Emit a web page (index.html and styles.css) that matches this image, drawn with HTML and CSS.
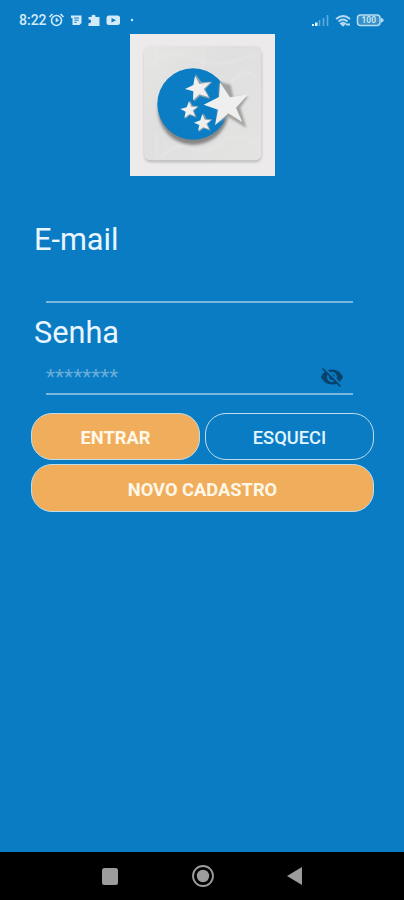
FILE: index.html
```html
<!DOCTYPE html>
<html lang="pt-BR">

<head>
    <meta charset="UTF-8">
    <meta name="viewport" content="width=device-width, initial-scale=1.0">
    <title>Login</title>
    <link rel="stylesheet" href="styles.css">
</head>

<body>
    <!-- Status bar -->
    <header class="status-bar">
        <span class="clock">8:22</span>
        <svg class="status-left" width="90" height="16" viewBox="0 0 90 16">
            <g fill="none" stroke="#d3eaf8" stroke-width="1.6">
                <circle cx="9.500" cy="8.500" r="5" />
                <path d="M2.500 5l3-3M16.500 5l-3-3M9.500 6v3l2-1" />
            </g>
            <g fill="#d3eaf8">
                <path d="M24 3.500h10.500v7.500l-2 2H25.500V6H24z" />
                <path d="M41.500 5h3.200a1.900 1.900 0 1 1 3.700 0H52.500v9H41.500v-3a1.900 1.900 0 1 0 0-3.500z" />
                <rect x="59.500" y="3.500" width="13.500" height="9.500" rx="2.500" />
                <circle cx="85" cy="8" r="1.200" />
            </g>
            <path d="M27 6h5M27.500 8.200h4M27.500 10.400h2" stroke="#0a7cc4" />
            <path d="M64.500 6l4.500 2.300-4.500 2.200z" fill="#0a7cc4" />
        </svg>
        <svg class="status-right" width="74" height="16" viewBox="0 0 74 16">
            <path d="M1 14v-2h2v2zM4 14v-3.500h2.500V14z" fill="#e1f5fa" />
            <path d="M8.500 14V8M12.500 14V6M16.500 14V3" stroke="#5eacdb" stroke-width="1.600" />
            <g fill="none" stroke="#b5dcf2" stroke-width="1.800">
                <path d="M25 7q7.500-6 14 0M27.500 9.500q4.500-4 9 0" />
                <path d="M30 11.500q2-1.500 4 0L32 13.500zM35 12.500h4" />
            </g>
            <rect x="46.500" y="3" width="22.500" height="10.500" rx="3" fill="#388fc9" stroke="#b5dcf2" stroke-width="1.500" />
            <path d="M70.500 6l2 2.200-2 2.200z" fill="#b5dcf2" stroke="#b5dcf2" />
            <text class="battery" x="57.700" y="11.300" text-anchor="middle">100</text>
        </svg>
    </header>

    <main class="login">
        <svg class="logo" viewBox="18 18 435 426">
            <defs>
                <linearGradient id="paper" x1="0" y1="0" x2="1" y2="1">
                    <stop offset="0" stop-color="#e7e6e5" />
                    <stop offset=".4" stop-color="#dedfde" />
                    <stop offset="1" stop-color="#e4e4e3" />
                </linearGradient>
                <filter id="soft" x="-20%" y="-20%" width="140%" height="140%">
                    <feGaussianBlur stdDeviation="5" />
                </filter>
                <filter id="edge" x="-20%" y="-20%" width="140%" height="140%">
                    <feGaussianBlur stdDeviation="2.500" />
                </filter>
            </defs>
            <rect x="18" y="18" width="435" height="426" fill="#eceaea" />
            <rect x="62" y="62" width="350" height="340" rx="18" fill="#b4b4b4" filter="url(#soft)" />
            <rect x="60" y="53" width="352" height="344" rx="18" fill="url(#paper)" />
            <g fill="none" stroke="#e9e9e8" stroke-width="6" opacity=".6" filter="url(#edge)">
                <path d="M98 60v60M98 310v84M236 55v68M70 120q50-60 120-35t110 20 105-30" />
                <path d="M110 390q50-55 90-30t90-15 115 10M320 170q30-60 80-20" />
            </g>
            <!-- Shadows -->
            <circle cx="208" cy="245" r="106" fill="#858585" filter="url(#soft)" />
            <circle cx="207" cy="228" r="107" fill="#0b7dc5" />
            <path d="M288 162l32 8 8 38 45-4-24 35 18 60-54-32-34 18z" fill="#a2a2a1" filter="url(#edge)" />
            <g fill="#8aa3b2">
                <path d="M215 138l17 24 33-1-21 23 15 29-31-9-18 17z" />
                <path d="M198 218l8 15 18 1-14 15 8 20-20-8-15 13z" />
                <path d="M239 256l8 16 18 2-14 14 9 20-21-7-15 12z" />
            </g>
            <g fill="#efefef">
                <path d="M288 163L318 208 373 199 336 239 355 283 313 256 273 292 282 245 239 230 285 207z" />
                <path d="M213 143L226 168 260 163 239 183 254 207 226 199 207 217 208 190 183 183 208 171z" />
                <path d="M195 220L202 236 221 237 206 247 213 265 197 258 181 270 185 251 169 243 188 238z" />
                <path d="M235 258L242 275 261 277 247 287 255 304 238 298 222 308 226 291 210 284 229 277z" />
            </g>
        </svg>

        <form class="form">
            <label class="label" for="email">E-mail</label>
            <div class="field field-email">
                <input type="text" id="email">
            </div>

            <label class="label" for="senha">Senha</label>
            <div class="field field-senha">
                <input type="password" id="senha" placeholder="********">
                <svg class="eye" viewBox="0 0 24 24">
                    <path d="M12 7c2.760 0 5 2.240 5 5 0 .650-.130 1.260-.360 1.830l2.920 2.920c1.510-1.260 2.700-2.890 3.430-4.750-1.730-4.390-6-7.500-11-7.500-1.400 0-2.740.250-3.980.700l2.160 2.160C10.740 7.130 11.350 7 12 7zM2 4.270l2.280 2.280.460.460C3.080 8.300 1.780 10.020 1 12c1.730 4.390 6 7.500 11 7.500 1.550 0 3.030-.300 4.380-.840l.420.420L19.730 22 21 20.730 3.270 3 2 4.270zM7.530 9.800l1.550 1.550c-.050.210-.080.430-.080.650 0 1.660 1.340 3 3 3 .220 0 .440-.030.650-.080l1.550 1.550c-.670.330-1.410.530-2.200.530-2.760 0-5-2.240-5-5 0-.790.200-1.530.530-2.200zm4.310-.780l3.150 3.150.020-.160c0-1.660-1.340-3-3-3l-.170.010z" />
                </svg>
            </div>

            <div class="buttons">
                <button type="button" class="btn btn-orange">ENTRAR</button>
                <button type="button" class="btn btn-outline">ESQUECI</button>
                <button type="button" class="btn btn-orange btn-wide">NOVO CADASTRO</button>
            </div>
        </form>
    </main>

    <!-- Android navigation -->
    <nav class="nav-bar">
        <svg width="24" height="24" viewBox="0 0 24 24">
            <rect x="4" y="4" width="16" height="17" rx="2.500" fill="#9c9c9c" />
        </svg>
        <svg width="24" height="24" viewBox="0 0 24 24">
            <circle cx="12" cy="12" r="10" fill="none" stroke="#9c9c9c" stroke-width="1.800" />
            <circle cx="12" cy="12" r="6.200" fill="#9c9c9c" />
        </svg>
        <svg width="24" height="24" viewBox="0 0 24 24">
            <path d="M4 12L19 3v18z" fill="#9c9c9c" />
        </svg>
    </nav>
</body>

</html>
```

FILE: styles.css
```css
* {
    box-sizing: border-box;
}

body {
    margin: 0;
    height: 900px;
    display: flex;
    flex-direction: column;
    overflow: hidden;
    font-family: Roboto, sans-serif;
    background-color: #0a7cc4;
    color: #e9f6ff;
}

.status-bar {
    height: 34px;
    padding: 12px 19px 0 19px;
    display: flex;
    align-items: flex-start;
}

.clock {
    width: 28px;
    font-size: 14px;
    line-height: 17px;
    font-weight: 500;
    color: #d3eaf8;
}

.status-right {
    margin-left: auto;
}

.battery {
    font-size: 8.5px;
    font-weight: bold;
    fill: #c5e6f5;
}

.login {
    flex: 1;
    display: flex;
    flex-direction: column;
}

.logo {
    width: 145px;
    height: 142px;
    margin-left: 130px;
}

.form {
    margin: 45px 30px 0 31px;
}

.label {
    display: block;
    height: 38px;
    padding-left: 3px;
    font-size: 30.7px;
    line-height: 38px;
}

.field {
    display: flex;
    margin: 0 21px 0 15px;
    border-bottom: 2px solid #79b7e1;
}

.field input {
    flex: 1;
    min-width: 0;
    padding: 0;
    border: none;
    outline: none;
    background: transparent;
    color: #fff;
    font-family: Roboto, sans-serif;
    font-size: 21px;
}

.field input::placeholder {
    color: #68add8;
    opacity: 1;
}

.field-email {
    height: 44px;
    margin-bottom: 11px;
}

.field-senha {
    height: 43px;
    padding-top: 8px;
}

.eye {
    width: 24px;
    height: 24px;
    margin: 5px 9px 0 0;
    fill: #07436d;
}

.buttons {
    margin-top: 18px;
    display: grid;
    grid-template-columns: 1fr 1fr;
    gap: 4px 5px;
}

.btn {
    height: 47px;
    padding: 2px 0 0;
    border: 1px solid #c0dcea;
    border-radius: 21px;
    font-family: Roboto, sans-serif;
    font-size: 18.3px;
    font-weight: 500;
    color: #e1f5ff;
    background: transparent;
}

.btn-orange {
    background-color: #f0ae5c;
    color: #fff7e8;
    font-weight: bold;
}

.btn-wide {
    height: 48px;
    grid-column: span 2;
}

.nav-bar {
    height: 48px;
    padding: 0 97px 0 98px;
    display: flex;
    justify-content: space-between;
    align-items: center;
    background-color: #000;
}
```
